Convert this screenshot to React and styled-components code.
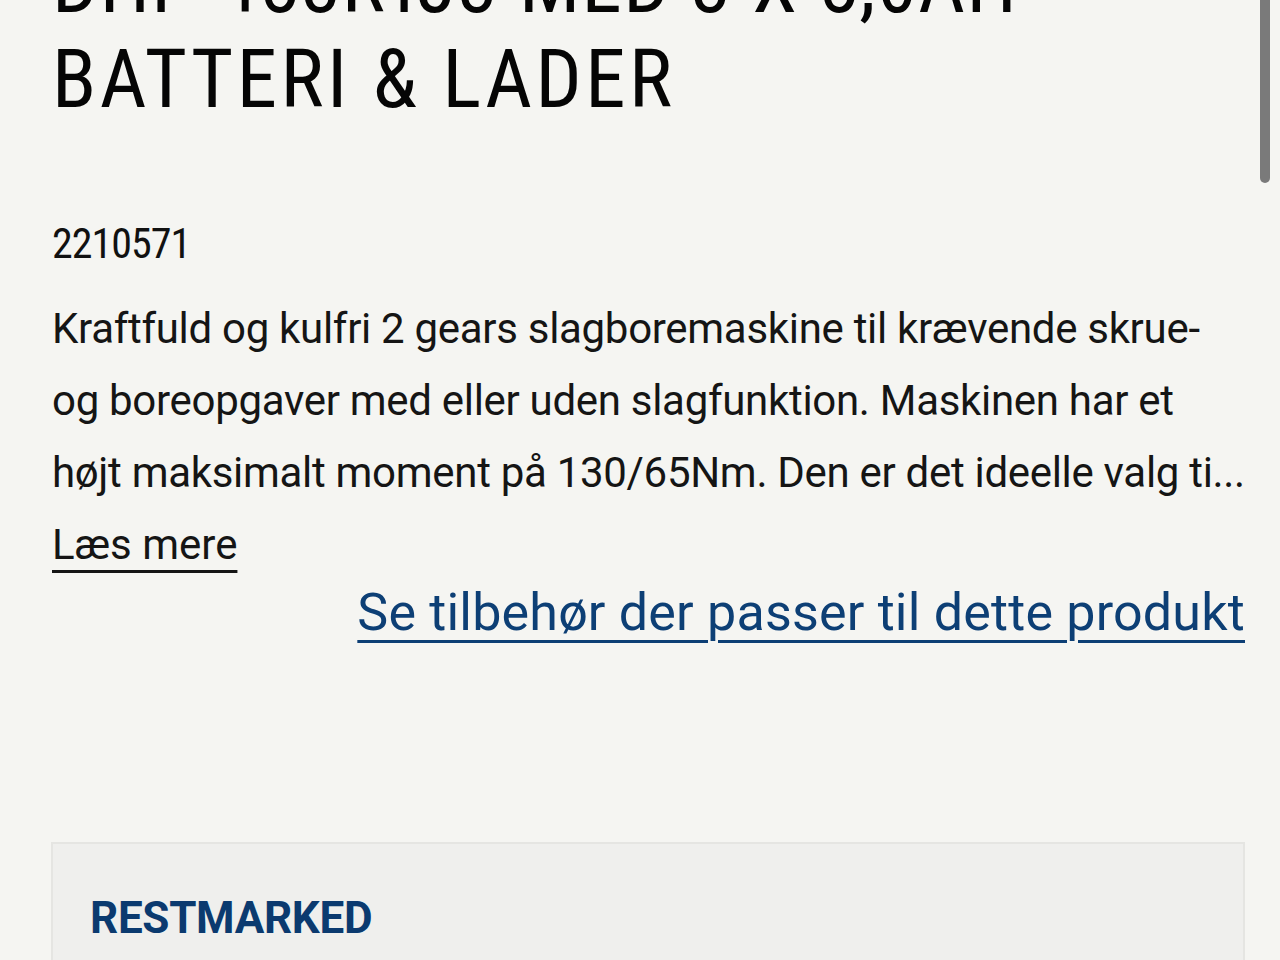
import React from "react";
import styled, { createGlobalStyle } from "styled-components";

const GlobalStyle = createGlobalStyle`
  html, body {
    margin: 0;
    padding: 0;
    background: #f5f5f2;
  }
  body {
    font-family: Roboto, "Noto Sans", sans-serif;
    color: #141414;
    overflow: hidden;
  }
`;

const Page = styled.main`
  padding: 0 35px 0 52px;
  margin-top: -63px;
`;

const Title = styled.h1`
  margin: 0;
  font-family: "Roboto Condensed", Roboto, sans-serif;
  font-weight: 400;
  font-size: 81px;
  line-height: 95px;
  color: #050505;
`;

const TitleLine = styled.span`
  display: block;
  letter-spacing: ${(p) => p.$spacing}px;
`;

const Sku = styled.div`
  margin-top: 81px;
  font-family: "Roboto Condensed", Roboto, sans-serif;
  font-size: 42px;
  line-height: 72px;
  letter-spacing: -1px;
  color: #111;
`;

const Description = styled.p`
  margin: 13px -20px 0 0;
  font-size: 42px;
  line-height: 72px;
  letter-spacing: -0.3px;
  color: #151515;
`;

const ReadMore = styled.a`
  display: block;
  width: max-content;
  font-size: 42px;
  line-height: 72px;
  color: #151515;
  text-decoration: underline;
  text-decoration-thickness: 3px;
  text-underline-offset: 11px;
  cursor: pointer;
`;

const AccessoryRow = styled.div`
  display: flex;
  justify-content: flex-end;
  margin-top: 2px;
`;

const AccessoryLink = styled.a`
  font-size: 52px;
  line-height: 60px;
  letter-spacing: 0.2px;
  color: #0d3f75;
  text-decoration: underline;
  text-decoration-thickness: 3px;
  text-underline-offset: 10px;
  cursor: pointer;
`;

const Panel = styled.section`
  margin-top: 199px;
  margin-left: -1px;
  background: #efefed;
  border: 2px solid #e5e5e2;
  border-bottom: none;
  padding: 48px 37px 120px;
`;

const PanelTitle = styled.h2`
  margin: 0;
  font-size: 44px;
  line-height: 53px;
  font-weight: 700;
  color: #0b3a6f;
  letter-spacing: -0.3px;
`;

const ScrollThumb = styled.div`
  position: fixed;
  top: -10px;
  right: 10px;
  width: 10px;
  height: 193px;
  border-radius: 5px;
  background: #7a7a7a;
`;

export default function App() {
  return (
    <>
      <GlobalStyle />
      <Page>
        <Title>
          <TitleLine $spacing={1.4}>DHP 458RTJ3 MED 3 X 5,0AH</TitleLine>
          <TitleLine $spacing={3.5}>BATTERI &amp; LADER</TitleLine>
        </Title>
        <Sku>2210571</Sku>
        <Description>
          Kraftfuld og kulfri 2 gears slagboremaskine til krævende skrue-
          <br />
          og boreopgaver med eller uden slagfunktion. Maskinen har et
          <br />
          højt maksimalt moment på 130/65Nm. Den er det ideelle valg ti...
        </Description>
        <ReadMore>Læs mere</ReadMore>
        <AccessoryRow>
          <AccessoryLink>Se tilbehør der passer til dette produkt</AccessoryLink>
        </AccessoryRow>
        <Panel>
          <PanelTitle>RESTMARKED</PanelTitle>
        </Panel>
      </Page>
      <ScrollThumb />
    </>
  );
}
